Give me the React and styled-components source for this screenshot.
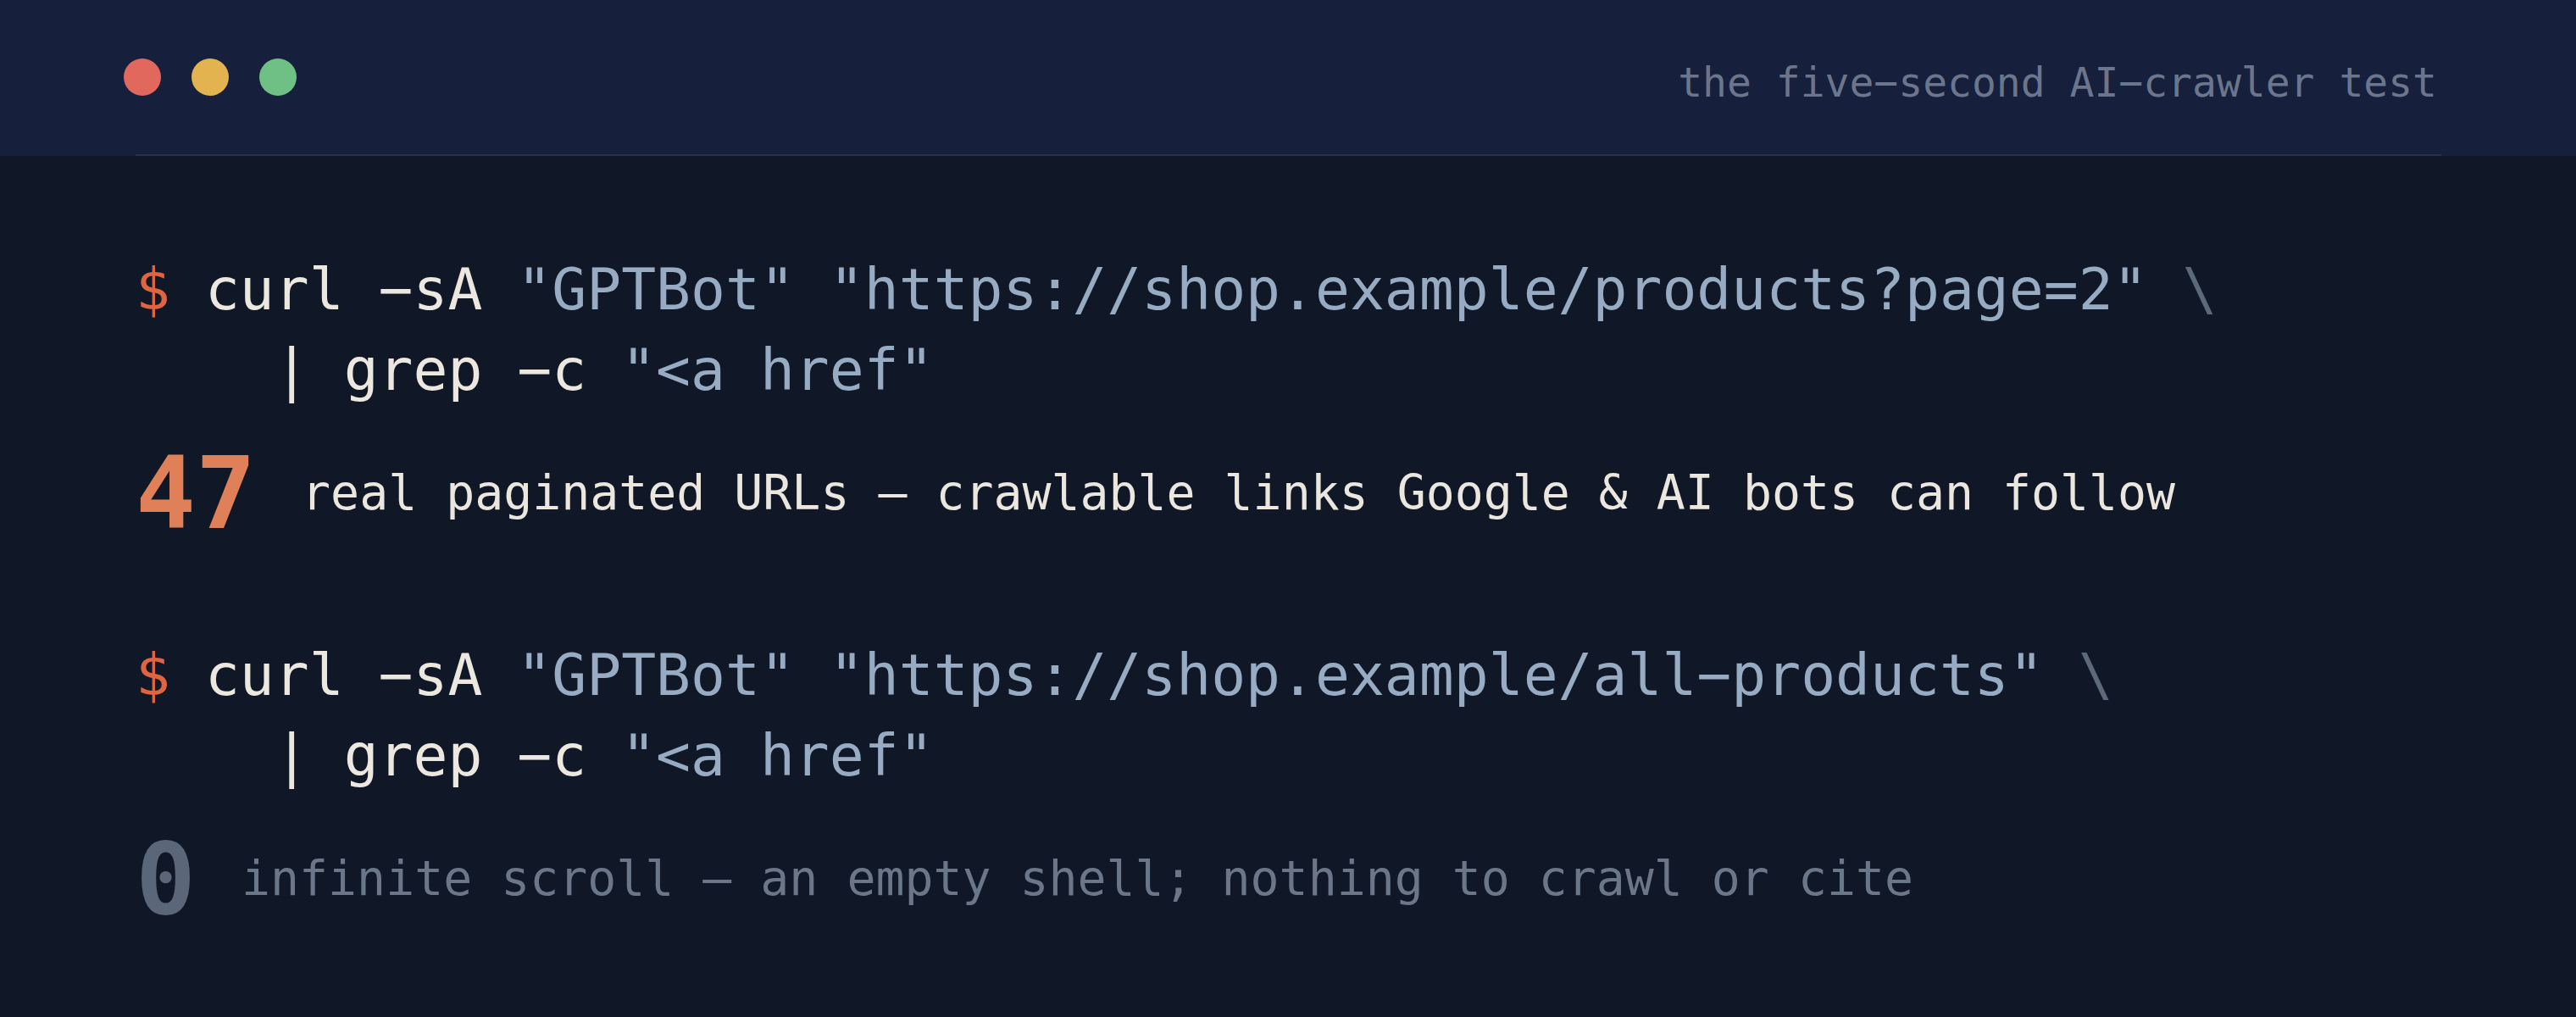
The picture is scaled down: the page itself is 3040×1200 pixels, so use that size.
import styled, { createGlobalStyle } from 'styled-components';

const GlobalStyle = createGlobalStyle`
  html, body {
    margin: 0;
    padding: 0;
    background: #101727;
  }
  #root {
    min-height: 100vh;
  }
`;

const MONO = `"DejaVu Sans Mono", "Liberation Mono", monospace`;

// the dashes in the commands are real minus signs (U+2212), as in the shot
const RUNS = [
  {
    url: 'https://shop.example/products?page=2',
    count: '47',
    note: 'real paginated URLs — crawlable links Google & AI bots can follow',
    good: true,
  },
  {
    url: 'https://shop.example/all−products',
    count: '0',
    note: 'infinite scroll — an empty shell; nothing to crawl or cite',
    good: false,
  },
];

const App = () => {
  return (
    <>
      <GlobalStyle />
      <Terminal>
        <TitleBar>
          <Bar>
            <Lights>
              <Light color="#e0685c" />
              <Light color="#e2b34f" />
              <Light color="#6ec084" />
            </Lights>
            <Title>the five−second AI−crawler test</Title>
          </Bar>
          <Divider />
        </TitleBar>

        <Screen>
          {RUNS.map((run) => (
            <Block key={run.url}>
              <Command>
                <Line>
                  <Prompt>$</Prompt> curl −sA <Str>"GPTBot"</Str>{' '}
                  <Str>"{run.url}"</Str> <Cont>\</Cont>
                </Line>
                <Line indent>
                  | grep −c <Str>"&lt;a href"</Str>
                </Line>
              </Command>
              <Result>
                <Count good={run.good}>{run.count}</Count>
                <Note good={run.good}>{run.note}</Note>
              </Result>
            </Block>
          ))}
        </Screen>
      </Terminal>
    </>
  );
};

// STYLES
const Terminal = styled.div`
  display: flex;
  flex-direction: column;
  min-height: 100vh;
  background: #101727;
  font-family: ${MONO};
`;

const TitleBar = styled.header`
  display: flex;
  flex-direction: column;
  background: #161f3b;
`;

const Bar = styled.div`
  height: 182px;
  display: flex;
  align-items: center;
  justify-content: space-between;
  padding: 0 164px 0 146px;
`;

const Divider = styled.div`
  height: 2px;
  margin: 0 159px 0 160px;
  background: #25314f;
`;

const Lights = styled.div`
  display: flex;
  gap: 36px;
`;

const Light = styled.span`
  width: 44px;
  height: 44px;
  border-radius: 50%;
  background: ${(p) => p.color};
`;

const Title = styled.span`
  margin-top: 12px;
  font-size: 48px;
  color: #6b768c;
  white-space: pre;
`;

const Screen = styled.main`
  display: flex;
  flex-direction: column;
  gap: 109px;
  padding: 110px 0 104px 160px;
`;

const Block = styled.section`
  display: flex;
  flex-direction: column;
  gap: 40px;
`;

const Command = styled.div`
  font-size: 68px;
  line-height: 95px;
  color: #ece7df;
`;

const Line = styled.div`
  white-space: pre;
  padding-left: ${(p) => (p.indent ? '4ch' : '0')};
`;

const Prompt = styled.span`
  color: #e0643f;
`;

const Str = styled.span`
  color: #97abc3;
`;

const Cont = styled.span`
  color: #5d6878;
`;

const Result = styled.div`
  display: flex;
  align-items: center;
  gap: 54px;
`;

const Count = styled.span`
  font-size: 118px;
  line-height: 116px;
  font-weight: bold;
  color: ${(p) => (p.good ? '#e08058' : '#5b6678')};
`;

const Note = styled.span`
  font-size: 56.5px;
  line-height: 1.4;
  white-space: pre;
  color: ${(p) => (p.good ? '#ebe6de' : '#6b7789')};
`;

export default App;
